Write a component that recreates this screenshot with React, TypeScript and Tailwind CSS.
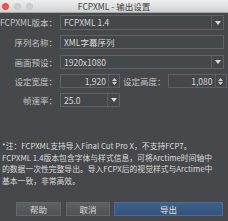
import React from "react";

const Arrow = () => (
  <div className="w-[12px] h-full border-l border-[#5c5f62] flex items-center justify-center">
    <svg width="6" height="4" viewBox="0 0 6 4"><path d="M0 0h6L3 4z" fill="#d8d8d8" /></svg>
  </div>
);

const Spinner = () => (
  <div className="w-[11px] h-full border-l border-[#5c5f62] flex flex-col items-center justify-center gap-[1px]">
    <svg width="5" height="3" viewBox="0 0 5 3"><path d="M0 3h5L2.5 0z" fill="#cfcfcf" /></svg>
    <svg width="5" height="3" viewBox="0 0 5 3"><path d="M0 0h5L2.5 3z" fill="#cfcfcf" /></svg>
  </div>
);

export default function App() {
  const label = "w-[57px] shrink-0 text-right text-[8.5px] text-[#c4c4c4] leading-none whitespace-nowrap";
  const field =
    "h-full flex items-center bg-[#45484b] border border-[#5f6266] text-[8.5px] text-[#d6d6d6] leading-none";
  return (
    <div className="w-[228px] h-[221px] bg-[#46484b] flex flex-col overflow-hidden font-['Noto_Sans_CJK_SC','Noto_Sans',sans-serif]">
      <div className="h-[13px] shrink-0 bg-gradient-to-b from-[#eeeeee] to-[#d3d3d3] grid grid-cols-[1fr_auto_1fr] items-center border-b border-[#a8a8a8]">
        <div className="flex items-center gap-[5px] pl-[2px]">
          <div className="w-[7px] h-[7px] rounded-full bg-[#f2544d] border border-[#d8423c]" />
          <div className="w-[7px] h-[7px] rounded-full bg-[#d0d0d0] border border-[#c0c0c0]" />
          <div className="w-[7px] h-[7px] rounded-full bg-[#d0d0d0] border border-[#c0c0c0]" />
        </div>
        <div className="text-[8.5px] leading-none text-[#3f3f3f] whitespace-nowrap">FCPXML - 输出设置</div>
        <div />
      </div>

      <div className="flex items-center h-[15px] mt-[2px]">
        <div className={label}>FCPXML版本：</div>
        <div className={`${field} ml-[3px] w-[164px] border-[#5c84b0]`}>
          <span className="flex-1 pl-[3px]">FCPXML 1.4</span>
          <Arrow />
        </div>
      </div>

      <div className="flex items-center h-[14px] mt-[5px]">
        <div className={label}>序列名称：</div>
        <div className={`${field} ml-[3px] w-[164px]`}>
          <span className="flex-1 pl-[3px]">XML字幕序列</span>
        </div>
      </div>

      <div className="flex items-center h-[14px] mt-[6px]">
        <div className={label}>画面预设：</div>
        <div className={`${field} ml-[3px] w-[164px]`}>
          <span className="flex-1 pl-[3px]">1920x1080</span>
          <Arrow />
        </div>
      </div>

      <div className="flex items-center h-[14px] mt-[5px]">
        <div className={label}>设定宽度：</div>
        <div className={`${field} ml-[3px] w-[60px]`}>
          <span className="flex-1 text-right pr-[2px]">1,920</span>
          <Spinner />
        </div>
        <div className="ml-[3px] text-[8.5px] text-[#c4c4c4] leading-none whitespace-nowrap">设定高度：</div>
        <div className={`${field} ml-[2px] w-[59px]`}>
          <span className="flex-1 text-right pr-[2px]">1,080</span>
          <Spinner />
        </div>
      </div>

      <div className="flex items-center h-[14px] mt-[5px]">
        <div className={label}>帧速率：</div>
        <div className={`${field} ml-[3px] w-[60px]`}>
          <span className="flex-1 pl-[3px]">25.0</span>
          <Arrow />
        </div>
      </div>

      <div className="mt-[33px] pl-[2px] pr-[2px] text-[7.8px] leading-[11.5px] text-[#dcdcdc] whitespace-nowrap">
        <div>*注：FCPXML支持导入Final Cut Pro X，不支持FCP7。</div>
        <div>FCPXML 1.4版本包含字体与样式信息，可将Arctime时间轴中</div>
        <div>的数据一次性完整导出。导入FCPX后的视觉样式与Arctime中</div>
        <div>基本一致，非常高效。</div>
      </div>

      <div className="mt-auto mb-[5px] flex items-center h-[14px] pl-[16px] pr-[5px]">
        <div className="w-[45px] h-full flex items-center justify-center bg-gradient-to-b from-[#5e6164] to-[#505356] border border-[#63666a] text-[8.5px] text-[#d8d8d8] leading-none">帮助</div>
        <div className="ml-[5px] w-[44px] h-full flex items-center justify-center bg-gradient-to-b from-[#5e6164] to-[#505356] border border-[#63666a] text-[8.5px] text-[#d8d8d8] leading-none">取消</div>
        <div className="ml-[4px] flex-1 h-full flex items-center justify-center bg-gradient-to-b from-[#3f6189] to-[#33527a] border border-[#4a6d96] text-[8.5px] text-[#e2e2e2] leading-none">导出</div>
      </div>
    </div>
  );
}
